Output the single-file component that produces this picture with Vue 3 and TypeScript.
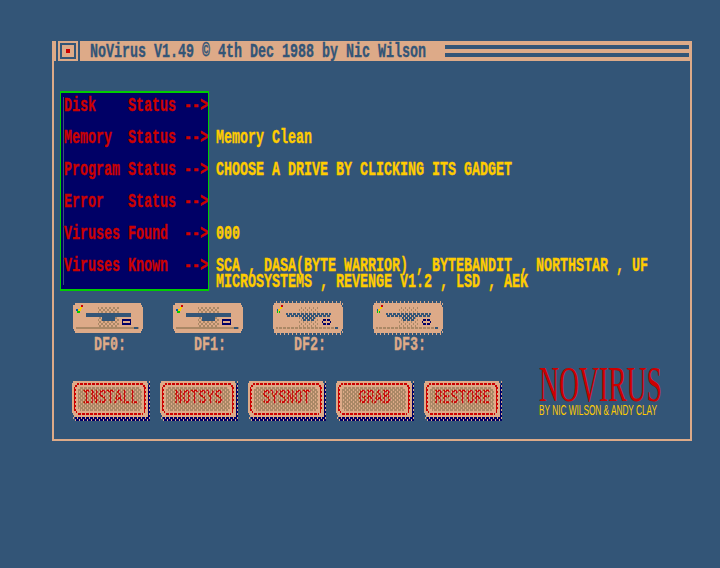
<script setup lang="ts">
interface StatusRow {
  label: string
  value: string[]
}
interface Drive {
  name: string
  ghosted: boolean
}

const rows: StatusRow[] = [
  { label: 'Disk    Status -->', value: [] },
  { label: 'Memory  Status -->', value: ['Memory Clean'] },
  { label: 'Program Status -->', value: ['CHOOSE A DRIVE BY CLICKING ITS GADGET'] },
  { label: 'Error   Status -->', value: [] },
  { label: 'Viruses Found  -->', value: ['000'] },
  {
    label: 'Viruses Known  -->',
    value: [
      'SCA , DASA(BYTE WARRIOR) , BYTEBANDIT , NORTHSTAR , UF',
      'MICROSYSTEMS , REVENGE V1.2 , LSD , AEK',
    ],
  },
]

const drives: Drive[] = [
  { name: 'DF0:', ghosted: false },
  { name: 'DF1:', ghosted: false },
  { name: 'DF2:', ghosted: true },
  { name: 'DF3:', ghosted: true },
]

const actions: string[] = ['INSTALL', 'NOTSYS', 'SYSNOT', 'GRAB', 'RESTORE']
</script>

<template>
  <main class="screen">
    <svg class="defs" width="0" height="0" aria-hidden="true">
      <defs>
        <pattern id="ghost" width="4" height="4" patternUnits="userSpaceOnUse">
          <rect x="1" y="0" width="1" height="2" fill="#ddaa88" />
          <rect x="3" y="2" width="1" height="2" fill="#ddaa88" />
        </pattern>
        <pattern id="vent" width="4" height="4" patternUnits="userSpaceOnUse">
          <path d="M0 0h2v2h-2zM2 2h2v2h-2z" fill="#aa8866" />
        </pattern>
      </defs>
    </svg>

    <section class="window">
      <header class="titlebar">
        <i class="edge"></i>
        <button class="close" aria-label="Close"><i></i></button>
        <h1 class="title"><span class="topaz">NoVirus V1.49 © 4th Dec 1988 by Nic Wilson</span></h1>
        <div class="drag"><i></i><i></i></div>
      </header>

      <div class="body">
        <div class="status">
          <div class="labels">
            <div class="label-list">
              <span v-for="row in rows" :key="row.label" class="topaz row">{{ row.label }}</span>
            </div>
          </div>
          <div class="values">
            <div v-for="row in rows" :key="row.label" class="value">
              <span v-for="line in row.value" :key="line" class="topaz">{{ line }}</span>
            </div>
          </div>
        </div>

        <div class="drives">
          <div v-for="drive in drives" :key="drive.name" class="drive">
            <svg width="72" height="34" viewBox="-1 -2 72 34" shape-rendering="crispEdges">
              <path d="M2 0h66v2h1v2h1v22h-1v2h-1v2h-66v-2h-1v-2h-1v-24h2z" fill="#ddaa88" />
              <rect x="25" y="4" width="21" height="20" fill="url(#vent)" />
              <path d="M13 10h45v4h-16v4h-13v-4h-16z" fill="#335577" />
              <rect x="49" y="16" width="9" height="6" fill="#000066" />
              <rect x="50" y="18" width="7" height="2" fill="#ddaa88" />
              <rect x="3" y="24" width="63" height="2" fill="#aa8866" />
              <rect x="61" y="24" width="4" height="2" fill="#335577" />
              <rect x="8" y="2" width="2" height="2" fill="#cc0000" />
              <path d="M7 4h2v2h-1v2h-3v-2h2z" fill="#ffcc00" />
              <rect x="3" y="6" width="2" height="2" fill="#0055bb" />
              <rect x="4" y="8" width="3" height="2" fill="#00cc00" />
              <rect v-if="drive.ghosted" x="0" y="-2" width="71" height="34" fill="url(#ghost)" />
            </svg>
            <span class="topaz">{{ drive.name }}</span>
          </div>
        </div>

        <footer class="bottom">
          <button v-for="action in actions" :key="action" class="action">
            <svg width="78" height="40" viewBox="0 0 78 40" shape-rendering="crispEdges">
              <path d="M3 36H75V4h2v-2h1V40H3z" fill="#000066" />
              <path d="M1 0H75v2h1V34h-1v2H2v-2H1v-2H0V2h1z" fill="#ddaa88" />
              <path d="M5 3H71M5 33H71" stroke="#cc0000" stroke-width="2" />
              <path d="M3 6V30M73 6V30" stroke="#cc0000" stroke-width="2" />
              <path d="M3 4h2v2h-2zM71 4h2v2h-2zM3 30h2v2h-2zM71 30h2v2h-2z" fill="#cc0000" />
              <path d="M8 6H68v2h2V28h-2v2H8v-2H6V8h2z" fill="#aa8866" />
              <text x="38.5" y="13.8" transform="scale(1 1.58)" class="caption">{{ action }}</text>
              <rect width="78" height="40" fill="url(#ghost)" />
            </svg>
          </button>
          <svg class="logo" width="132" height="56" viewBox="0 0 132 56">
            <text class="brand" x="1" y="35" textLength="123" lengthAdjust="spacingAndGlyphs">NOVIRUS</text>
            <text class="credit" x="1" y="49" textLength="118" lengthAdjust="spacingAndGlyphs">BY NIC WILSON &amp; ANDY CLAY</text>
          </svg>
        </footer>
      </div>
    </section>
  </main>
</template>

<style>
body {
  margin: 0;
  background: #335577;
}
</style>

<style scoped>
.screen {
  box-sizing: border-box;
  width: 720px;
  height: 568px;
  padding: 41px 28px 0 52px;
  background: #335577;
  overflow: hidden;
}
.defs {
  display: block;
}
.topaz {
  display: block;
  height: 16px;
  line-height: 16px;
  font-family: 'Liberation Mono', monospace;
  font-size: 13.333px;
  font-weight: 700;
  white-space: pre;
  transform: translateY(1.2px) scaleY(1.52);
  -webkit-text-stroke: 0.25px currentColor;
}
.window {
  box-sizing: border-box;
  width: 640px;
  height: 400px;
  border: solid #ddaa88;
  border-width: 0 2px 2px;
}
.titlebar {
  display: flex;
  height: 20px;
  margin: 0 -2px;
  background: #ddaa88;
}
.edge {
  width: 4px;
  border-right: 2px solid #335577;
}
.close {
  display: flex;
  box-sizing: border-box;
  width: 22px;
  padding: 2px;
  border: 0;
  border-right: 2px solid #335577;
  background: #ddaa88;
}
.close i {
  width: 4px;
  height: 4px;
  padding: 4px;
  border: 2px solid #335577;
  background: #cc0000 content-box;
}
.title {
  box-sizing: border-box;
  width: 365px;
  margin: 0;
  padding: 2px 0 0 10px;
  color: #335577;
}
.drag {
  display: flex;
  flex: 1;
  flex-direction: column;
  gap: 4px;
  padding: 4px 3px 0 0;
}
.drag i {
  height: 4px;
  background: #335577;
}
.body {
  padding: 30px 0 0 6px;
}
.status {
  display: flex;
  gap: 7px;
}
.labels {
  box-sizing: border-box;
  width: 149px;
  height: 200px;
  padding: 4px 0 0 2px;
  border: solid #00cc00;
  border-width: 2px 1px;
  background: #000066;
  color: #cc0000;
}
.label-list {
  display: grid;
  grid-auto-rows: 32px;
  height: 188px;
  border-left: 1px solid #335577;
}
.values {
  display: grid;
  grid-auto-rows: 32px;
  height: 194px;
  padding-top: 6px;
  color: #ffcc00;
}
.drives {
  display: flex;
  gap: 28px;
  padding: 10px 0 0 12px;
}
.drive {
  width: 72px;
  color: #ddaa88;
}
.drive svg {
  display: block;
}
.drive .topaz {
  padding: 1px 0 0 22px;
}
.bottom {
  display: flex;
  gap: 10px;
  padding: 29px 0 0 12px;
}
.action {
  width: 78px;
  height: 40px;
  padding: 0;
  border: 0;
  background: none;
}
.action svg {
  display: block;
}
.caption {
  fill: #cc0000;
  stroke: #cc0000;
  stroke-width: 0.3px;
  font: 13.333px 'Liberation Mono', monospace;
  text-anchor: middle;
}
.logo {
  margin: -15px 0 0 26px;
  overflow: visible;
}
.brand {
  fill: #cc0000;
  font: 51px 'Liberation Serif', serif;
}
.credit {
  fill: #ffcc00;
  font: 14px 'Liberation Sans', sans-serif;
}
</style>
